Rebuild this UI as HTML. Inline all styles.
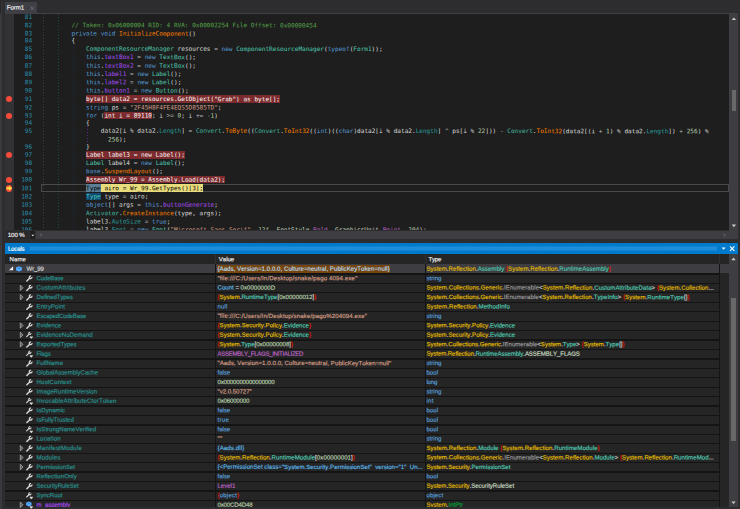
<!DOCTYPE html>
<html lang="en"><head><meta charset="utf-8"><title>dnSpy - Form1</title>
<style>
html,body{margin:0;padding:0}
body{width:740px;height:509px;overflow:hidden;background:#2d2d30;position:relative;font-family:"Liberation Sans",sans-serif;font-size:6.1px;color:#dcdcdc;font-kerning:none}
.abs,.ln,.cl,.hl,.row div,.t{position:absolute}
.ed{position:absolute;left:5px;top:14.2px;width:724.3px;height:216.3px;background:#1e1e1e;overflow:hidden}
.code{font-family:"DejaVu Sans Mono", "Liberation Mono", monospace;font-size:6.088px;white-space:pre;line-height:8.3px;height:8.3px}
.ln{color:#2b91af;text-align:right;left:10px;width:17.2px}
.cl{color:#dcdcdc}
.k{color:#569cd6}.c{color:#57a64a}.ty{color:#4ec9b0}.st{color:#45b8a0}.m{color:#ff8000}.f{color:#ab4ef8}.p{color:#2a9d9d}
.n{color:#b5cea8}.s{color:#d69d85}.o{color:#b4b4b4}.w{color:#ffffff}.b{color:#000}
.ns{color:#e2bc00}.r{color:#e51400}.i{color:#9b9b9b}.en{color:#c8dcc0}.ef{color:#bd63c5}.vt{color:#00a838}.lb{color:#5cb8e6}
.hl{height:7.8px}
.g{position:absolute;top:0;width:0;border-left:1px dotted}
.t{white-space:pre;line-height:8.3px;height:8.3px;-webkit-text-stroke:0.16px}
.pn{color:#27928e}
.lb2{color:#b4dcf2}
</style></head><body>
<div class="abs" style="left:0;top:2.3px;width:1.2px;height:11.2px;background:#252526"></div><div class="abs" style="left:0;top:13.6px;width:1.8px;height:496px;background:#3a3a3e"></div><div class="abs" style="left:1.2px;top:2.3px;width:0.6px;height:11.3px;background:#38383c"></div><div class="abs" style="left:5px;top:2.3px;width:32.1px;height:11px;background:#3f3f46"></div><div class="abs" style="left:5px;top:13px;width:733.4px;height:1.2px;background:#3f3f46"></div><div class="t" style="left:6px;top:3px;transform:translate(0.80px,0.45px) rotate(0.05deg);color:#f1f1f1;letter-spacing:-0.065px">Form1</div><svg class="abs" style="left:29.6px;top:5.7px" width="4.5" height="4.5" viewBox="0 0 9 9"><path d="M1 1L8 8M8 1L1 8" stroke="#77777c" stroke-width="1.6" fill="none"/></svg><div class="ed"><div class="abs" style="left:0;top:0;width:9.2px;height:100%;background:#323234"></div><div class="abs" style="left:38.15px;top:0.00px;width:0.9px;height:216.30px;background:repeating-linear-gradient(to bottom,#414141 0,#414141 1.1px,transparent 1.1px,transparent 3px)"></div><div class="abs" style="left:53.05px;top:0.00px;width:0.9px;height:216.30px;background:repeating-linear-gradient(to bottom,#1d4e3c 0,#1d4e3c 1.1px,transparent 1.1px,transparent 3px)"></div><div class="abs" style="left:67.65px;top:30.30px;width:0.9px;height:186.00px;background:repeating-linear-gradient(to bottom,#172d45 0,#172d45 1.1px,transparent 1.1px,transparent 3px)"></div><div class="abs" style="left:82.25px;top:112.30px;width:0.9px;height:17.00px;background:repeating-linear-gradient(to bottom,#5c2a8c 0,#5c2a8c 1.1px,transparent 1.1px,transparent 3px)"></div><div class="abs" style="left:35.90px;top:169.90px;width:688.20px;height:8.40px;border:0.9px solid #4a4a4a;box-sizing:border-box"></div><div class="hl" style="left:81.08px;top:80.90px;width:194.25px;background:#7b2b2d"></div><div class="hl" style="left:99.41px;top:97.40px;width:47.65px;background:#7b2b2d"></div><div class="hl" style="left:81.08px;top:136.60px;width:98.95px;background:#7b2b2d"></div><div class="hl" style="left:81.08px;top:161.40px;width:139.27px;background:#7b2b2d"></div><div class="hl" style="left:81.08px;top:170.10px;width:117.28px;background:#e9dc7c"></div><div class="hl" style="left:81.08px;top:170.10px;width:14.66px;background:#5b7f96"></div><div class="hl" style="left:81.08px;top:178.40px;width:14.66px;background:#0e4a72"></div><div class="ln code" style="left:10px;top:-2px;transform:translate(0.00px,0.90px) rotate(0.05deg)">81</div><div class="ln code" style="left:10px;top:7px;transform:translate(0.00px,0.30px) rotate(0.05deg)">82</div><div class="cl code" style="left:66px;top:7px;transform:translate(0.42px,0.30px) rotate(0.05deg)"><span class="c">// Token: 0x06000004 RID: 4 RVA: 0x00002254 File Offset: 0x00000454</span></div><div class="ln code" style="left:10px;top:15px;transform:translate(0.00px,0.60px) rotate(0.05deg)">83</div><div class="cl code" style="left:66px;top:15px;transform:translate(0.42px,0.60px) rotate(0.05deg)"><span class="k">private</span> <span class="k">void</span> <span class="m">InitializeComponent</span>()</div><div class="ln code" style="left:10px;top:22px;transform:translate(0.00px,0.50px) rotate(0.05deg)">84</div><div class="cl code" style="left:66px;top:22px;transform:translate(0.42px,0.50px) rotate(0.05deg)">{</div><div class="ln code" style="left:10px;top:30px;transform:translate(0.00px,0.90px) rotate(0.05deg)">85</div><div class="cl code" style="left:81px;top:30px;transform:translate(0.08px,0.90px) rotate(0.05deg)"><span class="ty">ComponentResourceManager</span> resources <span class="o">=</span> <span class="k">new</span> <span class="ty">ComponentResourceManager</span>(<span class="k">typeof</span>(<span class="ty">Form1</span>));</div><div class="ln code" style="left:10px;top:39px;transform:translate(0.00px,0.10px) rotate(0.05deg)">86</div><div class="cl code" style="left:81px;top:39px;transform:translate(0.08px,0.10px) rotate(0.05deg)"><span class="k">this</span>.<span class="f">textBox1</span> <span class="o">=</span> <span class="k">new</span> <span class="ty">TextBox</span>();</div><div class="ln code" style="left:10px;top:47px;transform:translate(0.00px,0.70px) rotate(0.05deg)">87</div><div class="cl code" style="left:81px;top:47px;transform:translate(0.08px,0.70px) rotate(0.05deg)"><span class="k">this</span>.<span class="f">textBox2</span> <span class="o">=</span> <span class="k">new</span> <span class="ty">TextBox</span>();</div><div class="ln code" style="left:10px;top:56px;transform:translate(0.00px,0.00px) rotate(0.05deg)">88</div><div class="cl code" style="left:81px;top:56px;transform:translate(0.08px,0.00px) rotate(0.05deg)"><span class="k">this</span>.<span class="f">label1</span> <span class="o">=</span> <span class="k">new</span> <span class="ty">Label</span>();</div><div class="ln code" style="left:10px;top:64px;transform:translate(0.00px,0.30px) rotate(0.05deg)">89</div><div class="cl code" style="left:81px;top:64px;transform:translate(0.08px,0.30px) rotate(0.05deg)"><span class="k">this</span>.<span class="f">label2</span> <span class="o">=</span> <span class="k">new</span> <span class="ty">Label</span>();</div><div class="ln code" style="left:10px;top:72px;transform:translate(0.00px,0.60px) rotate(0.05deg)">90</div><div class="cl code" style="left:81px;top:72px;transform:translate(0.08px,0.60px) rotate(0.05deg)"><span class="k">this</span>.<span class="f">button1</span> <span class="o">=</span> <span class="k">new</span> <span class="ty">Button</span>();</div><div class="ln code" style="left:10px;top:81px;transform:translate(0.00px,0.10px) rotate(0.05deg)">91</div><div class="cl code" style="left:81px;top:81px;transform:translate(0.08px,0.10px) rotate(0.05deg)"><span class="w">byte[] data2 = resources.GetObject("Grab") as byte[];</span></div><div class="ln code" style="left:10px;top:89px;transform:translate(0.00px,0.50px) rotate(0.05deg)">92</div><div class="cl code" style="left:81px;top:89px;transform:translate(0.08px,0.50px) rotate(0.05deg)"><span class="k">string</span> ps <span class="o">=</span> <span class="s">"2F45H8F4FE4EQS5D8585TD"</span>;</div><div class="ln code" style="left:10px;top:97px;transform:translate(0.00px,0.60px) rotate(0.05deg)">93</div><div class="cl code" style="left:81px;top:97px;transform:translate(0.08px,0.60px) rotate(0.05deg)"><span class="k">for</span> (<span class="w">int i = 89110</span>; i <span class="o">&gt;=</span> <span class="n">0</span>; i <span class="o">+=</span> <span class="o">-</span><span class="n">1</span>)</div><div class="ln code" style="left:10px;top:104px;transform:translate(0.00px,0.70px) rotate(0.05deg)">94</div><div class="cl code" style="left:81px;top:104px;transform:translate(0.08px,0.70px) rotate(0.05deg)">{</div><div class="ln code" style="left:10px;top:113px;transform:translate(0.00px,0.00px) rotate(0.05deg)">95</div><div class="cl code" style="left:95px;top:113px;transform:translate(0.74px,0.00px) rotate(0.05deg)">data2[i <span class="o">%</span> data2.<span class="p">Length</span>] <span class="o">=</span> <span class="st">Convert</span>.<span class="m">ToByte</span>((<span class="st">Convert</span>.<span class="m">ToInt32</span>((<span class="k">int</span>)((<span class="k">char</span>)data2[i <span class="o">%</span> data2.<span class="p">Length</span>] <span class="o">^</span> ps[i <span class="o">%</span> <span class="n">22</span>])) <span class="o">-</span> <span class="st">Convert</span>.<span class="m">ToInt32</span>(data2[(i <span class="o">+</span> <span class="n">1</span>) <span class="o">%</span> data2.<span class="p">Length</span>]) <span class="o">+</span> <span class="n">256</span>) <span class="o">%</span></div><div class="cl code" style="left:103px;top:121px;transform:translate(0.07px,0.50px) rotate(0.05deg)"><span class="n">256</span>);</div><div class="ln code" style="left:10px;top:128px;transform:translate(0.00px,0.70px) rotate(0.05deg)">96</div><div class="cl code" style="left:81px;top:128px;transform:translate(0.08px,0.70px) rotate(0.05deg)">}</div><div class="ln code" style="left:10px;top:136px;transform:translate(0.00px,0.80px) rotate(0.05deg)">97</div><div class="cl code" style="left:81px;top:136px;transform:translate(0.08px,0.80px) rotate(0.05deg)"><span class="w">Label label3 = new Label();</span></div><div class="ln code" style="left:10px;top:145px;transform:translate(0.00px,0.00px) rotate(0.05deg)">98</div><div class="cl code" style="left:81px;top:145px;transform:translate(0.08px,0.00px) rotate(0.05deg)"><span class="ty">Label</span> label4 <span class="o">=</span> <span class="k">new</span> <span class="ty">Label</span>();</div><div class="ln code" style="left:10px;top:153px;transform:translate(0.00px,0.30px) rotate(0.05deg)">99</div><div class="cl code" style="left:81px;top:153px;transform:translate(0.08px,0.30px) rotate(0.05deg)"><span class="k">base</span>.<span class="m">SuspendLayout</span>();</div><div class="ln code" style="left:10px;top:161px;transform:translate(0.00px,0.60px) rotate(0.05deg)">100</div><div class="cl code" style="left:81px;top:161px;transform:translate(0.08px,0.60px) rotate(0.05deg)"><span class="w">Assembly Wr_99 = Assembly.Load(data2);</span></div><div class="ln code" style="left:10px;top:170px;transform:translate(0.00px,0.30px) rotate(0.05deg)">101</div><div class="cl code" style="left:81px;top:170px;transform:translate(0.08px,0.30px) rotate(0.05deg)"><span class="b">Type airo = Wr_99.GetTypes()[3];</span></div><div class="ln code" style="left:10px;top:178px;transform:translate(0.00px,0.60px) rotate(0.05deg)">102</div><div class="cl code" style="left:81px;top:178px;transform:translate(0.08px,0.60px) rotate(0.05deg)"><span class="ty">Type</span> type <span class="o">=</span> airo;</div><div class="ln code" style="left:10px;top:186px;transform:translate(0.00px,0.80px) rotate(0.05deg)">103</div><div class="cl code" style="left:81px;top:186px;transform:translate(0.08px,0.80px) rotate(0.05deg)"><span class="k">object</span>[] args <span class="o">=</span> <span class="k">this</span>.<span class="f">buttonGenerate</span>;</div><div class="ln code" style="left:10px;top:195px;transform:translate(0.00px,0.20px) rotate(0.05deg)">104</div><div class="cl code" style="left:81px;top:195px;transform:translate(0.08px,0.20px) rotate(0.05deg)"><span class="st">Activator</span>.<span class="m">CreateInstance</span>(type, args);</div><div class="ln code" style="left:10px;top:203px;transform:translate(0.00px,0.60px) rotate(0.05deg)">105</div><div class="cl code" style="left:81px;top:203px;transform:translate(0.08px,0.60px) rotate(0.05deg)">label3.<span class="p">AutoSize</span> <span class="o">=</span> <span class="k">true</span>;</div><div class="ln code" style="left:10px;top:211px;transform:translate(0.00px,0.70px) rotate(0.05deg)">106</div><div class="cl code" style="left:81px;top:211px;transform:translate(0.08px,0.70px) rotate(0.05deg)">label3.<span class="p">Font</span> <span class="o">=</span> <span class="k">new</span> <span class="ty">Font</span>(<span class="s">"Microsoft Sans Serif"</span>, <span class="n">12f</span>, <span class="en">FontStyle</span>.<span class="ef">Bold</span>, <span class="en">GraphicsUnit</span>.<span class="ef">Point</span>, <span class="n">204</span>);</div><div class="abs" style="left:0.70px;top:81.90px;width:6.4px;height:6.4px;border-radius:50%;background:#fa4a3a"></div><div class="abs" style="left:0.70px;top:98.40px;width:6.4px;height:6.4px;border-radius:50%;background:#fa4a3a"></div><div class="abs" style="left:0.70px;top:137.60px;width:6.4px;height:6.4px;border-radius:50%;background:#fa4a3a"></div><div class="abs" style="left:0.70px;top:162.40px;width:6.4px;height:6.4px;border-radius:50%;background:#fa4a3a"></div><div class="abs" style="left:0.70px;top:171.10px;width:6.4px;height:6.4px;border-radius:50%;background:#fa4a3a"></div><svg class="abs" style="left:0.70px;top:171.10px" width="6.4" height="6.4" viewBox="0 0 16 16"><path d="M1.5 5.5H8V2L15 8L8 14V10.5H1.5Z" fill="#ffe14a" stroke="#f6c83a" stroke-width="0.8"/></svg></div>
<div class="abs" style="left:729.3px;top:14.2px;width:9.1px;height:224.9px;background:#3e3e42"></div><div class="abs" style="left:731.7px;top:89.7px;width:4.4px;height:21.2px;background:#686868"></div><div class="abs" style="left:5px;top:230.5px;width:724.3px;height:8.6px;background:#3e3e42"></div><div class="abs" style="left:5px;top:230.5px;width:30.7px;height:8.7px;background:#333337"></div><div class="abs" style="left:5.7px;top:231.3px;width:23.2px;height:7.3px;background:#29292b"></div><div class="abs" style="left:30.2px;top:231.3px;width:4.8px;height:7.3px;background:#1f1f20"></div><div class="t" style="left:7px;top:230px;transform:translate(0.70px,0.95px) rotate(0.05deg);color:#f1f1f1;letter-spacing:-0.02px;word-spacing:-0.3px">100 %</div><div class="abs" style="left:5.1px;top:243.0px;width:732.9px;height:11.0px;background:#007acc"></div><div class="t" style="left:7px;top:244px;transform:translate(0.90px,0.75px) rotate(0.05deg);color:#fff;letter-spacing:-0.172px">Locals</div><div class="abs" style="left:5.1px;top:254.0px;width:732.9px;height:253.0px;background:#252526;overflow:hidden"><div class="abs" style="left:723.90px;top:0;width:9.1px;height:100%;background:#3e3e42"></div><div class="abs" style="left:726.30px;top:43.80px;width:4.6px;height:143.10px;background:#686868"></div><div class="t" style="left:4px;top:1px;transform:translate(0.50px,0.15px) rotate(0.05deg);color:#f1f1f1;letter-spacing:0.057px">Name</div><div class="t" style="left:213px;top:1px;transform:translate(0.70px,0.15px) rotate(0.05deg);color:#f1f1f1;letter-spacing:-0.010px">Value</div><div class="t" style="left:423px;top:1px;transform:translate(0.50px,0.15px) rotate(0.05deg);color:#f1f1f1;letter-spacing:-0.256px">Type</div><div class="abs" style="left:0;top:10.40px;width:723.90px;height:8.9px;background:#3d3d42"></div><div class="abs" style="left:212.10px;top:10.80px;width:172.40px;height:8.0px;background:#75450d"></div><div class="abs" style="left:0;top:19.33px;width:714.90px;height:1.25px;background:#141414"></div><div class="abs" style="left:0;top:28.77px;width:714.90px;height:1.25px;background:#141414"></div><div class="abs" style="left:0;top:38.20px;width:714.90px;height:1.25px;background:#141414"></div><div class="abs" style="left:0;top:47.64px;width:714.90px;height:1.25px;background:#141414"></div><div class="abs" style="left:0;top:57.07px;width:714.90px;height:1.25px;background:#141414"></div><div class="abs" style="left:0;top:66.51px;width:714.90px;height:1.25px;background:#141414"></div><div class="abs" style="left:0;top:75.95px;width:714.90px;height:1.25px;background:#141414"></div><div class="abs" style="left:0;top:85.38px;width:714.90px;height:1.25px;background:#141414"></div><div class="abs" style="left:0;top:94.82px;width:714.90px;height:1.25px;background:#141414"></div><div class="abs" style="left:0;top:104.25px;width:714.90px;height:1.25px;background:#141414"></div><div class="abs" style="left:0;top:113.69px;width:714.90px;height:1.25px;background:#141414"></div><div class="abs" style="left:0;top:123.13px;width:714.90px;height:1.25px;background:#141414"></div><div class="abs" style="left:0;top:132.56px;width:714.90px;height:1.25px;background:#141414"></div><div class="abs" style="left:0;top:142.00px;width:714.90px;height:1.25px;background:#141414"></div><div class="abs" style="left:0;top:151.43px;width:714.90px;height:1.25px;background:#141414"></div><div class="abs" style="left:0;top:160.87px;width:714.90px;height:1.25px;background:#141414"></div><div class="abs" style="left:0;top:170.31px;width:714.90px;height:1.25px;background:#141414"></div><div class="abs" style="left:0;top:179.74px;width:714.90px;height:1.25px;background:#141414"></div><div class="abs" style="left:0;top:189.18px;width:714.90px;height:1.25px;background:#141414"></div><div class="abs" style="left:0;top:198.61px;width:714.90px;height:1.25px;background:#141414"></div><div class="abs" style="left:0;top:208.05px;width:714.90px;height:1.25px;background:#141414"></div><div class="abs" style="left:0;top:217.49px;width:714.90px;height:1.25px;background:#141414"></div><div class="abs" style="left:0;top:226.92px;width:714.90px;height:1.25px;background:#141414"></div><div class="abs" style="left:0;top:236.36px;width:714.90px;height:1.25px;background:#141414"></div><div class="abs" style="left:0;top:245.79px;width:714.90px;height:1.25px;background:#141414"></div><div class="abs" style="left:0;top:255.23px;width:714.90px;height:1.25px;background:#141414"></div><div class="abs" style="left:210.00px;top:0;width:1px;height:100%;background:#141414"></div><div class="abs" style="left:210.00px;top:0;width:1px;height:10.4px;background:#303033"></div><div class="abs" style="left:420.10px;top:0;width:1px;height:100%;background:#141414"></div><div class="abs" style="left:420.10px;top:0;width:1px;height:10.4px;background:#303033"></div><div class="abs" style="left:713.90px;top:0;width:1px;height:100%;background:#141414"></div><div class="abs" style="left:713.90px;top:0;width:1px;height:10.4px;background:#303033"></div><div class="t" style="left:21px;top:10px;transform:translate(0.50px,0.75px) rotate(0.05deg);letter-spacing:-0.111px">Wr_99</div><div class="t" style="left:212px;top:10px;transform:translate(0.50px,0.75px) rotate(0.05deg);letter-spacing:0.039px"><span class="lb2">{Aads, Version=1.0.0.0, Culture=neutral, PublicKeyToken=null}</span></div><div class="t" style="left:421px;top:10px;transform:translate(0.40px,0.75px) rotate(0.05deg);letter-spacing:0.025px"><span class="ns">System</span>.<span class="ns">Reflection</span>.<span class="ty">Assembly</span> <span class="r">{</span><span class="ns">System</span>.<span class="ns">Reflection</span>.<span class="ty">RuntimeAssembly</span><span class="r">}</span></div><div class="t pn" style="left:31px;top:20px;transform:translate(0.60px,0.19px) rotate(0.05deg);letter-spacing:-0.211px">CodeBase</div><div class="t" style="left:212px;top:20px;transform:translate(0.50px,0.19px) rotate(0.05deg);letter-spacing:0.134px"><span class="s">"file:///C:/Users/In/Desktop/snake/pago 4094.exe"</span></div><div class="t" style="left:421px;top:20px;transform:translate(0.40px,0.19px) rotate(0.05deg);letter-spacing:0.031px"><span class="k">string</span></div><div class="t pn" style="left:31px;top:29px;transform:translate(0.60px,0.62px) rotate(0.05deg);letter-spacing:0.126px">CustomAttributes</div><div class="t" style="left:212px;top:29px;transform:translate(0.50px,0.62px) rotate(0.05deg);letter-spacing:-0.013px"><span class="lb">Count</span> = <span class="n">0x0000000D</span></div><div class="t" style="left:421px;top:29px;transform:translate(0.40px,0.62px) rotate(0.05deg);letter-spacing:0.041px"><span class="ns">System</span>.<span class="ns">Collections</span>.<span class="ns">Generic</span>.<span class="i">IEnumerable</span>&lt;<span class="ns">System</span>.<span class="ns">Reflection</span>.<span class="ty">CustomAttributeData</span>&gt; <span class="r">{</span><span class="ns">System</span>.<span class="ns">Collection</span>...</div><div class="t pn" style="left:31px;top:39px;transform:translate(0.60px,0.06px) rotate(0.05deg);letter-spacing:-0.117px">DefinedTypes</div><div class="t" style="left:212px;top:39px;transform:translate(0.50px,0.06px) rotate(0.05deg);letter-spacing:-0.019px"><span class="r">{</span><span class="ns">System</span>.<span class="ty">RuntimeType</span>[<span class="n">0x00000012</span>]<span class="r">}</span></div><div class="t" style="left:421px;top:39px;transform:translate(0.40px,0.06px) rotate(0.05deg);letter-spacing:0.031px"><span class="ns">System</span>.<span class="ns">Collections</span>.<span class="ns">Generic</span>.<span class="i">IEnumerable</span>&lt;<span class="ns">System</span>.<span class="ns">Reflection</span>.<span class="ty">TypeInfo</span>&gt; <span class="r">{</span><span class="ns">System</span>.<span class="ty">RuntimeType</span>[]<span class="r">}</span></div><div class="t pn" style="left:31px;top:48px;transform:translate(0.60px,0.49px) rotate(0.05deg);letter-spacing:0.036px">EntryPoint</div><div class="t" style="left:212px;top:48px;transform:translate(0.50px,0.49px) rotate(0.05deg);letter-spacing:0.151px"><span class="k">null</span></div><div class="t" style="left:421px;top:48px;transform:translate(0.40px,0.49px) rotate(0.05deg);letter-spacing:0.076px"><span class="ns">System</span>.<span class="ns">Reflection</span>.<span class="ty">MethodInfo</span></div><div class="t pn" style="left:31px;top:57px;transform:translate(0.60px,0.93px) rotate(0.05deg);letter-spacing:-0.188px">EscapedCodeBase</div><div class="t" style="left:212px;top:57px;transform:translate(0.50px,0.93px) rotate(0.05deg);letter-spacing:0.109px"><span class="s">"file:///C:/Users/In/Desktop/snake/pago%204094.exe"</span></div><div class="t" style="left:421px;top:57px;transform:translate(0.40px,0.93px) rotate(0.05deg);letter-spacing:0.031px"><span class="k">string</span></div><div class="t pn" style="left:31px;top:67px;transform:translate(0.60px,0.37px) rotate(0.05deg);letter-spacing:-0.087px">Evidence</div><div class="t" style="left:212px;top:67px;transform:translate(0.50px,0.37px) rotate(0.05deg);letter-spacing:0.018px"><span class="r">{</span><span class="ns">System</span>.<span class="ns">Security</span>.<span class="ns">Policy</span>.<span class="ty">Evidence</span><span class="r">}</span></div><div class="t" style="left:421px;top:67px;transform:translate(0.40px,0.37px) rotate(0.05deg);letter-spacing:-0.004px"><span class="ns">System</span>.<span class="ns">Security</span>.<span class="ns">Policy</span>.<span class="ty">Evidence</span></div><div class="t pn" style="left:31px;top:76px;transform:translate(0.60px,0.80px) rotate(0.05deg);letter-spacing:0.016px">EvidenceNoDemand</div><div class="t" style="left:212px;top:76px;transform:translate(0.50px,0.80px) rotate(0.05deg);letter-spacing:0.018px"><span class="r">{</span><span class="ns">System</span>.<span class="ns">Security</span>.<span class="ns">Policy</span>.<span class="ty">Evidence</span><span class="r">}</span></div><div class="t" style="left:421px;top:76px;transform:translate(0.40px,0.80px) rotate(0.05deg);letter-spacing:-0.004px"><span class="ns">System</span>.<span class="ns">Security</span>.<span class="ns">Policy</span>.<span class="ty">Evidence</span></div><div class="t pn" style="left:31px;top:86px;transform:translate(0.60px,0.24px) rotate(0.05deg);letter-spacing:-0.076px">ExportedTypes</div><div class="t" style="left:212px;top:86px;transform:translate(0.50px,0.24px) rotate(0.05deg);letter-spacing:-0.048px"><span class="r">{</span><span class="ns">System</span>.<span class="ty">Type</span>[<span class="n">0x00000008</span>]<span class="r">}</span></div><div class="t" style="left:421px;top:86px;transform:translate(0.40px,0.24px) rotate(0.05deg);letter-spacing:-0.006px"><span class="ns">System</span>.<span class="ns">Collections</span>.<span class="ns">Generic</span>.<span class="i">IEnumerable</span>&lt;<span class="ns">System</span>.<span class="ty">Type</span>&gt; <span class="r">{</span><span class="ns">System</span>.<span class="ty">Type</span>[]<span class="r">}</span></div><div class="t pn" style="left:31px;top:95px;transform:translate(0.60px,0.67px) rotate(0.05deg);letter-spacing:-0.183px">Flags</div><div class="t" style="left:212px;top:95px;transform:translate(0.50px,0.67px) rotate(0.05deg);letter-spacing:-0.327px"><span class="ef">ASSEMBLY_FLAGS_INITIALIZED</span></div><div class="t" style="left:421px;top:95px;transform:translate(0.40px,0.67px) rotate(0.05deg);letter-spacing:-0.093px"><span class="ns">System</span>.<span class="ns">Reflection</span>.<span class="ty">RuntimeAssembly</span>.<span class="en">ASSEMBLY_FLAGS</span></div><div class="t pn" style="left:31px;top:105px;transform:translate(0.60px,0.11px) rotate(0.05deg);letter-spacing:0.050px">FullName</div><div class="t" style="left:212px;top:105px;transform:translate(0.50px,0.11px) rotate(0.05deg);letter-spacing:0.059px"><span class="s">"Aads, Version=1.0.0.0, Culture=neutral, PublicKeyToken=null"</span></div><div class="t" style="left:421px;top:105px;transform:translate(0.40px,0.11px) rotate(0.05deg);letter-spacing:0.031px"><span class="k">string</span></div><div class="t pn" style="left:31px;top:114px;transform:translate(0.60px,0.55px) rotate(0.05deg);letter-spacing:-0.006px">GlobalAssemblyCache</div><div class="t" style="left:212px;top:114px;transform:translate(0.50px,0.55px) rotate(0.05deg);letter-spacing:-0.037px"><span class="k">false</span></div><div class="t" style="left:421px;top:114px;transform:translate(0.40px,0.55px) rotate(0.05deg);letter-spacing:0.042px"><span class="k">bool</span></div><div class="t pn" style="left:31px;top:123px;transform:translate(0.60px,0.98px) rotate(0.05deg);letter-spacing:0.121px">HostContext</div><div class="t" style="left:212px;top:123px;transform:translate(0.50px,0.98px) rotate(0.05deg);letter-spacing:-0.212px"><span class="n">0x0000000000000000</span></div><div class="t" style="left:421px;top:123px;transform:translate(0.40px,0.98px) rotate(0.05deg);letter-spacing:-0.183px"><span class="k">long</span></div><div class="t pn" style="left:31px;top:133px;transform:translate(0.60px,0.42px) rotate(0.05deg);letter-spacing:0.015px">ImageRuntimeVersion</div><div class="t" style="left:212px;top:133px;transform:translate(0.50px,0.42px) rotate(0.05deg);letter-spacing:-0.027px"><span class="s">"v2.0.50727"</span></div><div class="t" style="left:421px;top:133px;transform:translate(0.40px,0.42px) rotate(0.05deg);letter-spacing:0.031px"><span class="k">string</span></div><div class="t pn" style="left:31px;top:142px;transform:translate(0.60px,0.85px) rotate(0.05deg);letter-spacing:0.095px">InvocableAttributeCtorToken</div><div class="t" style="left:212px;top:142px;transform:translate(0.50px,0.85px) rotate(0.05deg);letter-spacing:-0.188px"><span class="n">0x06000000</span></div><div class="t" style="left:421px;top:142px;transform:translate(0.40px,0.85px) rotate(0.05deg);letter-spacing:0.286px"><span class="k">int</span></div><div class="t pn" style="left:31px;top:152px;transform:translate(0.60px,0.29px) rotate(0.05deg);letter-spacing:0.003px">IsDynamic</div><div class="t" style="left:212px;top:152px;transform:translate(0.50px,0.29px) rotate(0.05deg);letter-spacing:-0.037px"><span class="k">false</span></div><div class="t" style="left:421px;top:152px;transform:translate(0.40px,0.29px) rotate(0.05deg);letter-spacing:0.042px"><span class="k">bool</span></div><div class="t pn" style="left:31px;top:161px;transform:translate(0.60px,0.73px) rotate(0.05deg);letter-spacing:-0.084px">IsFullyTrusted</div><div class="t" style="left:212px;top:161px;transform:translate(0.50px,0.73px) rotate(0.05deg);letter-spacing:0.272px"><span class="k">true</span></div><div class="t" style="left:421px;top:161px;transform:translate(0.40px,0.73px) rotate(0.05deg);letter-spacing:0.042px"><span class="k">bool</span></div><div class="t pn" style="left:31px;top:171px;transform:translate(0.60px,0.16px) rotate(0.05deg);letter-spacing:-0.007px">IsStrongNameVerified</div><div class="t" style="left:212px;top:171px;transform:translate(0.50px,0.16px) rotate(0.05deg);letter-spacing:-0.037px"><span class="k">false</span></div><div class="t" style="left:421px;top:171px;transform:translate(0.40px,0.16px) rotate(0.05deg);letter-spacing:0.042px"><span class="k">bool</span></div><div class="t pn" style="left:31px;top:180px;transform:translate(0.60px,0.60px) rotate(0.05deg);letter-spacing:0.130px">Location</div><div class="t" style="left:212px;top:180px;transform:translate(0.50px,0.60px) rotate(0.05deg);letter-spacing:0.335px"><span class="s">""</span></div><div class="t" style="left:421px;top:180px;transform:translate(0.40px,0.60px) rotate(0.05deg);letter-spacing:0.031px"><span class="k">string</span></div><div class="t pn" style="left:31px;top:190px;transform:translate(0.60px,0.03px) rotate(0.05deg);letter-spacing:0.167px">ManifestModule</div><div class="t" style="left:212px;top:190px;transform:translate(0.50px,0.03px) rotate(0.05deg);letter-spacing:0.112px"><span class="lb">{Aads.dll}</span></div><div class="t" style="left:421px;top:190px;transform:translate(0.40px,0.03px) rotate(0.05deg);letter-spacing:0.055px"><span class="ns">System</span>.<span class="ns">Reflection</span>.<span class="ty">Module</span> <span class="r">{</span><span class="ns">System</span>.<span class="ns">Reflection</span>.<span class="ty">RuntimeModule</span><span class="r">}</span></div><div class="t pn" style="left:31px;top:199px;transform:translate(0.60px,0.47px) rotate(0.05deg);letter-spacing:0.106px">Modules</div><div class="t" style="left:212px;top:199px;transform:translate(0.50px,0.47px) rotate(0.05deg);letter-spacing:0.064px"><span class="r">{</span><span class="ns">System</span>.<span class="ns">Reflection</span>.<span class="ty">RuntimeModule</span>[<span class="n">0x00000001</span>]<span class="r">}</span></div><div class="t" style="left:421px;top:199px;transform:translate(0.40px,0.47px) rotate(0.05deg);letter-spacing:0.042px"><span class="ns">System</span>.<span class="ns">Collections</span>.<span class="ns">Generic</span>.<span class="i">IEnumerable</span>&lt;<span class="ns">System</span>.<span class="ns">Reflection</span>.<span class="ty">Module</span>&gt; <span class="r">{</span><span class="ns">System</span>.<span class="ns">Reflection</span>.<span class="ty">RuntimeMod</span>...</div><div class="t pn" style="left:31px;top:208px;transform:translate(0.60px,0.91px) rotate(0.05deg);letter-spacing:-0.079px">PermissionSet</div><div class="t" style="left:212px;top:208px;transform:translate(0.50px,0.91px) rotate(0.05deg);letter-spacing:0.018px"><span class="lb">{&lt;PermissionSet class="System.Security.PermissionSet"  version="1"  Un...</span></div><div class="t" style="left:421px;top:208px;transform:translate(0.40px,0.91px) rotate(0.05deg);letter-spacing:-0.039px"><span class="ns">System</span>.<span class="ns">Security</span>.<span class="ty">PermissionSet</span></div><div class="t pn" style="left:31px;top:218px;transform:translate(0.60px,0.34px) rotate(0.05deg);letter-spacing:0.045px">ReflectionOnly</div><div class="t" style="left:212px;top:218px;transform:translate(0.50px,0.34px) rotate(0.05deg);letter-spacing:-0.037px"><span class="k">false</span></div><div class="t" style="left:421px;top:218px;transform:translate(0.40px,0.34px) rotate(0.05deg);letter-spacing:0.042px"><span class="k">bool</span></div><div class="t pn" style="left:31px;top:227px;transform:translate(0.60px,0.78px) rotate(0.05deg);letter-spacing:-0.116px">SecurityRuleSet</div><div class="t" style="left:212px;top:227px;transform:translate(0.50px,0.78px) rotate(0.05deg);letter-spacing:-0.029px"><span class="ef">Level1</span></div><div class="t" style="left:421px;top:227px;transform:translate(0.40px,0.78px) rotate(0.05deg);letter-spacing:-0.056px"><span class="ns">System</span>.<span class="ns">Security</span>.<span class="en">SecurityRuleSet</span></div><div class="t pn" style="left:31px;top:237px;transform:translate(0.60px,0.21px) rotate(0.05deg);letter-spacing:-0.081px">SyncRoot</div><div class="t" style="left:212px;top:237px;transform:translate(0.50px,0.21px) rotate(0.05deg);letter-spacing:0.181px"><span class="r">{</span><span class="k">object</span><span class="r">}</span></div><div class="t" style="left:421px;top:237px;transform:translate(0.40px,0.21px) rotate(0.05deg);letter-spacing:0.104px"><span class="k">object</span></div><div class="t f" style="left:31px;top:246px;transform:translate(0.60px,0.65px) rotate(0.05deg);letter-spacing:-0.064px">m_assembly</div><div class="t" style="left:212px;top:246px;transform:translate(0.50px,0.65px) rotate(0.05deg);letter-spacing:-0.162px"><span class="n">0x00CD4D48</span></div><div class="t" style="left:421px;top:246px;transform:translate(0.40px,0.65px) rotate(0.05deg);letter-spacing:0.007px"><span class="ns">System</span>.<span class="vt">IntPtr</span></div></div>
<svg class="abs" style="left:0;top:0" width="740" height="509" viewBox="0 0 740 509"><defs><pattern id="grip" width="1.64" height="1.64" patternUnits="userSpaceOnUse"><rect width="0.82" height="0.82" fill="#3c9fe6"/><rect x="0.82" y="0.82" width="0.82" height="0.82" fill="#3c9fe6"/></pattern></defs><rect x="29.6" y="246.4" width="687.4" height="4.1" fill="url(#grip)"/><polygon points="731.70,20.10 736.10,20.10 733.90,17.50" fill="#c8c8c8"/><polygon points="731.70,224.60 736.10,224.60 733.90,227.20" fill="#c8c8c8"/><polygon points="41.80,232.90 41.80,237.10 39.40,235.00" fill="#5c5c60"/><polygon points="723.70,232.90 723.70,237.10 726.10,235.00" fill="#5c5c60"/><polygon points="31.30,234.65 34.30,234.65 32.80,236.35" fill="#f0f0f0"/><polygon points="721.60,247.45 725.60,247.45 723.60,249.75" fill="#ffffff"/><path d="M730.0 246.4L734.4 250.8M734.4 246.4L730.0 250.8" stroke="#fff" stroke-width="1.15" fill="none"/><polygon points="731.30,260.20 735.70,260.20 733.50,257.60" fill="#c8c8c8"/><polygon points="731.30,501.50 735.70,501.50 733.50,504.10" fill="#c8c8c8"/><polygon points="13.1,266.2 13.1,270.2 8.9,270.2" fill="#f1f1f1"/><g transform="translate(15.8,265.90) scale(0.39)"><path d="M8 1L15.5 4.2V11L8 14.5L0.5 11V4.2Z" fill="#55aaff"/><path d="M8 4.2L11.5 5.800L8 7.400L4.500 5.800Z" fill="#2d6fb8"/></g><g transform="translate(25.8,274.84) scale(0.455)"><g fill="none" stroke="#d9d9d9"><path d="M13.4 4.5A2.9 2.9 0 1 1 11.5 2.600" stroke-width="2.8"/><path d="M8.8 7.2L2.300 13.700" stroke-width="3.1" stroke-linecap="round"/></g></g><polygon points="20.3,285.07 23.0,287.77 20.3,290.47" fill="#5a5a5c" stroke="#b4b4b4" stroke-width="0.75"/><g transform="translate(25.8,284.27) scale(0.455)"><g fill="none" stroke="#d9d9d9"><path d="M13.4 4.5A2.9 2.9 0 1 1 11.5 2.600" stroke-width="2.8"/><path d="M8.8 7.2L2.300 13.700" stroke-width="3.1" stroke-linecap="round"/></g></g><polygon points="20.3,294.51 23.0,297.21 20.3,299.91" fill="#5a5a5c" stroke="#b4b4b4" stroke-width="0.75"/><g transform="translate(25.8,293.71) scale(0.455)"><g fill="none" stroke="#d9d9d9"><path d="M13.4 4.5A2.9 2.9 0 1 1 11.5 2.600" stroke-width="2.8"/><path d="M8.8 7.2L2.300 13.700" stroke-width="3.1" stroke-linecap="round"/></g></g><g transform="translate(25.8,303.14) scale(0.455)"><g fill="none" stroke="#d9d9d9"><path d="M13.4 4.5A2.9 2.9 0 1 1 11.5 2.600" stroke-width="2.8"/><path d="M8.8 7.2L2.300 13.700" stroke-width="3.1" stroke-linecap="round"/></g></g><g transform="translate(25.8,312.58) scale(0.455)"><g fill="none" stroke="#d9d9d9"><path d="M13.4 4.5A2.9 2.9 0 1 1 11.5 2.600" stroke-width="2.8"/><path d="M8.8 7.2L2.300 13.700" stroke-width="3.1" stroke-linecap="round"/></g></g><polygon points="20.3,322.82 23.0,325.52 20.3,328.22" fill="#5a5a5c" stroke="#b4b4b4" stroke-width="0.75"/><g transform="translate(25.8,322.02) scale(0.455)"><g fill="none" stroke="#d9d9d9"><path d="M13.4 4.5A2.9 2.9 0 1 1 11.5 2.600" stroke-width="2.8"/><path d="M8.8 7.2L2.300 13.700" stroke-width="3.1" stroke-linecap="round"/></g></g><polygon points="20.3,332.25 23.0,334.95 20.3,337.65" fill="#5a5a5c" stroke="#b4b4b4" stroke-width="0.75"/><g transform="translate(25.8,331.35) scale(0.38)"><g fill="none" stroke="#d9d9d9"><path d="M13.4 4.5A2.9 2.9 0 1 1 11.5 2.600" stroke-width="2.8"/><path d="M8.8 7.2L2.300 13.700" stroke-width="3.1" stroke-linecap="round"/></g></g><g transform="translate(25.6,331.65) scale(0.455)"><path d="M12.5 15.8l-3-3a1.7 1.7 0 0 1 2.400-2.400l.6.6.6-.6a1.7 1.7 0 0 1 2.400 2.400z" fill="#d6d6d6"/></g><polygon points="20.3,341.69 23.0,344.39 20.3,347.09" fill="#5a5a5c" stroke="#b4b4b4" stroke-width="0.75"/><g transform="translate(25.8,340.89) scale(0.455)"><g fill="none" stroke="#d9d9d9"><path d="M13.4 4.5A2.9 2.9 0 1 1 11.5 2.600" stroke-width="2.8"/><path d="M8.8 7.2L2.300 13.700" stroke-width="3.1" stroke-linecap="round"/></g></g><g transform="translate(25.8,350.22) scale(0.38)"><g fill="none" stroke="#d9d9d9"><path d="M13.4 4.5A2.9 2.9 0 1 1 11.5 2.600" stroke-width="2.8"/><path d="M8.8 7.2L2.300 13.700" stroke-width="3.1" stroke-linecap="round"/></g></g><g transform="translate(25.6,350.52) scale(0.455)"><path d="M12.5 15.8l-3-3a1.7 1.7 0 0 1 2.400-2.400l.6.6.6-.6a1.7 1.7 0 0 1 2.400 2.400z" fill="#d6d6d6"/></g><g transform="translate(25.8,359.76) scale(0.455)"><g fill="none" stroke="#d9d9d9"><path d="M13.4 4.5A2.9 2.9 0 1 1 11.5 2.600" stroke-width="2.8"/><path d="M8.8 7.2L2.300 13.700" stroke-width="3.1" stroke-linecap="round"/></g></g><g transform="translate(25.8,369.20) scale(0.455)"><g fill="none" stroke="#d9d9d9"><path d="M13.4 4.5A2.9 2.9 0 1 1 11.5 2.600" stroke-width="2.8"/><path d="M8.8 7.2L2.300 13.700" stroke-width="3.1" stroke-linecap="round"/></g></g><g transform="translate(25.8,378.63) scale(0.455)"><g fill="none" stroke="#d9d9d9"><path d="M13.4 4.5A2.9 2.9 0 1 1 11.5 2.600" stroke-width="2.8"/><path d="M8.8 7.2L2.300 13.700" stroke-width="3.1" stroke-linecap="round"/></g></g><g transform="translate(25.8,388.07) scale(0.455)"><g fill="none" stroke="#d9d9d9"><path d="M13.4 4.5A2.9 2.9 0 1 1 11.5 2.600" stroke-width="2.8"/><path d="M8.8 7.2L2.300 13.700" stroke-width="3.1" stroke-linecap="round"/></g></g><g transform="translate(25.8,397.40) scale(0.38)"><g fill="none" stroke="#d9d9d9"><path d="M13.4 4.5A2.9 2.9 0 1 1 11.5 2.600" stroke-width="2.8"/><path d="M8.8 7.2L2.300 13.700" stroke-width="3.1" stroke-linecap="round"/></g></g><g transform="translate(25.6,397.70) scale(0.455)"><path d="M12.5 15.8l-3-3a1.7 1.7 0 0 1 2.400-2.400l.6.6.6-.6a1.7 1.7 0 0 1 2.400 2.400z" fill="#d6d6d6"/></g><g transform="translate(25.8,406.94) scale(0.455)"><g fill="none" stroke="#d9d9d9"><path d="M13.4 4.5A2.9 2.9 0 1 1 11.5 2.600" stroke-width="2.8"/><path d="M8.8 7.2L2.300 13.700" stroke-width="3.1" stroke-linecap="round"/></g></g><g transform="translate(25.8,416.38) scale(0.455)"><g fill="none" stroke="#d9d9d9"><path d="M13.4 4.5A2.9 2.9 0 1 1 11.5 2.600" stroke-width="2.8"/><path d="M8.8 7.2L2.300 13.700" stroke-width="3.1" stroke-linecap="round"/></g></g><g transform="translate(25.8,425.71) scale(0.38)"><g fill="none" stroke="#d9d9d9"><path d="M13.4 4.5A2.9 2.9 0 1 1 11.5 2.600" stroke-width="2.8"/><path d="M8.8 7.2L2.300 13.700" stroke-width="3.1" stroke-linecap="round"/></g></g><g transform="translate(25.6,426.01) scale(0.455)"><path d="M12.5 15.8l-3-3a1.7 1.7 0 0 1 2.400-2.400l.6.6.6-.6a1.7 1.7 0 0 1 2.400 2.400z" fill="#d6d6d6"/></g><g transform="translate(25.8,435.25) scale(0.455)"><g fill="none" stroke="#d9d9d9"><path d="M13.4 4.5A2.9 2.9 0 1 1 11.5 2.600" stroke-width="2.8"/><path d="M8.8 7.2L2.300 13.700" stroke-width="3.1" stroke-linecap="round"/></g></g><polygon points="20.3,445.48 23.0,448.18 20.3,450.88" fill="#5a5a5c" stroke="#b4b4b4" stroke-width="0.75"/><g transform="translate(25.8,444.68) scale(0.455)"><g fill="none" stroke="#d9d9d9"><path d="M13.4 4.5A2.9 2.9 0 1 1 11.5 2.600" stroke-width="2.8"/><path d="M8.8 7.2L2.300 13.700" stroke-width="3.1" stroke-linecap="round"/></g></g><polygon points="20.3,454.92 23.0,457.62 20.3,460.32" fill="#5a5a5c" stroke="#b4b4b4" stroke-width="0.75"/><g transform="translate(25.8,454.12) scale(0.455)"><g fill="none" stroke="#d9d9d9"><path d="M13.4 4.5A2.9 2.9 0 1 1 11.5 2.600" stroke-width="2.8"/><path d="M8.8 7.2L2.300 13.700" stroke-width="3.1" stroke-linecap="round"/></g></g><polygon points="20.3,464.36 23.0,467.06 20.3,469.76" fill="#5a5a5c" stroke="#b4b4b4" stroke-width="0.75"/><g transform="translate(25.8,463.56) scale(0.455)"><g fill="none" stroke="#d9d9d9"><path d="M13.4 4.5A2.9 2.9 0 1 1 11.5 2.600" stroke-width="2.8"/><path d="M8.8 7.2L2.300 13.700" stroke-width="3.1" stroke-linecap="round"/></g></g><g transform="translate(25.8,472.99) scale(0.455)"><g fill="none" stroke="#d9d9d9"><path d="M13.4 4.5A2.9 2.9 0 1 1 11.5 2.600" stroke-width="2.8"/><path d="M8.8 7.2L2.300 13.700" stroke-width="3.1" stroke-linecap="round"/></g></g><g transform="translate(25.8,482.43) scale(0.455)"><g fill="none" stroke="#d9d9d9"><path d="M13.4 4.5A2.9 2.9 0 1 1 11.5 2.600" stroke-width="2.8"/><path d="M8.8 7.2L2.300 13.700" stroke-width="3.1" stroke-linecap="round"/></g></g><g transform="translate(25.8,491.76) scale(0.38)"><g fill="none" stroke="#d9d9d9"><path d="M13.4 4.5A2.9 2.9 0 1 1 11.5 2.600" stroke-width="2.8"/><path d="M8.8 7.2L2.300 13.700" stroke-width="3.1" stroke-linecap="round"/></g></g><g transform="translate(25.6,492.06) scale(0.455)"><path d="M12.5 15.8l-3-3a1.7 1.7 0 0 1 2.400-2.400l.6.6.6-.6a1.7 1.7 0 0 1 2.400 2.400z" fill="#d6d6d6"/></g><polygon points="20.3,502.10 23.0,504.80 20.3,507.50" fill="#5a5a5c" stroke="#b4b4b4" stroke-width="0.75"/><g transform="translate(26.0,501.20) scale(0.36)"><path d="M8 1L15.5 4.2V11L8 14.5L0.5 11V4.2Z" fill="#55aaff"/><path d="M8 4.2L11.5 5.800L8 7.400L4.500 5.800Z" fill="#2d6fb8"/></g><g transform="translate(25.6,501.50) scale(0.455)"><path d="M12.5 15.8l-3-3a1.7 1.7 0 0 1 2.400-2.400l.6.6.6-.6a1.7 1.7 0 0 1 2.400 2.400z" fill="#d6d6d6"/></g></svg>
</body></html>
